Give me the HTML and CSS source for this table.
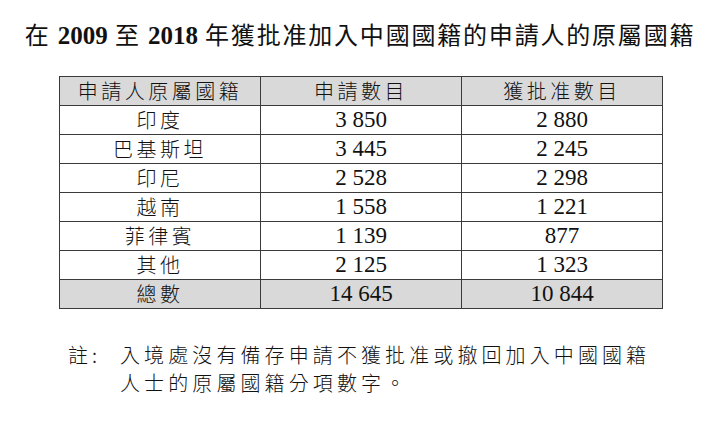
FILE: index.html
```html
<!DOCTYPE html>
<html lang="zh-Hant">
<head>
<meta charset="utf-8">
<link rel="stylesheet" href="styles.css">
</head>
<body>
<h1 class="title">在 <span class="num">2009</span> 至 <span class="num">2018</span> 年獲批准加入中國國籍的申請人的原屬國籍</h1>
<table class="data">
  <thead>
    <tr class="shade">
      <th>申請人原屬國籍</th>
      <th>申請數目</th>
      <th>獲批准數目</th>
    </tr>
  </thead>
  <tbody>
    <tr><td>印度</td><td class="n">3 850</td><td class="n">2 880</td></tr>
    <tr><td>巴基斯坦</td><td class="n">3 445</td><td class="n">2 245</td></tr>
    <tr><td>印尼</td><td class="n">2 528</td><td class="n">2 298</td></tr>
    <tr><td>越南</td><td class="n">1 558</td><td class="n">1 221</td></tr>
    <tr><td>菲律賓</td><td class="n">1 139</td><td class="n">877</td></tr>
    <tr><td>其他</td><td class="n">2 125</td><td class="n">1 323</td></tr>
    <tr class="shade"><td>總數</td><td class="n">14 645</td><td class="n">10 844</td></tr>
  </tbody>
</table>
<div class="note">
  <span class="label">註:</span>
  <p class="note-text">入境處沒有備存申請不獲批准或撤回加入中國國籍<br>人士的原屬國籍分項數字。</p>
</div>
</body>
</html>
```

FILE: styles.css
```css
html, body {
  margin: 0;
  padding: 0;
  background: #ffffff;
  color: #111111;
  font-family: "Noto Sans CJK TC", "Noto Sans CJK SC", sans-serif;
}

.title {
  margin: 0;
  padding-top: 19px;
  height: 56px;
  box-sizing: border-box;
  font-size: 24px;
  line-height: 30px;
  font-weight: 400;
  letter-spacing: 1.8px;
  text-align: center;
  white-space: nowrap;
}

.num {
  font-family: "Liberation Serif", serif;
  font-weight: 700;
  font-size: 25px;
  letter-spacing: 0;
}

.data {
  margin: 20px 0 0 59px;
  width: 604px;
  border-collapse: collapse;
  table-layout: fixed;
}

.data th,
.data td {
  border: 1px solid #3a3a3a;
  height: 28px;
  padding: 0;
  text-align: center;
  vertical-align: middle;
  font-size: 20px;
  font-weight: 300;
  line-height: 28px;
  letter-spacing: 3.5px;
  white-space: nowrap;
}

.data td.n {
  font-family: "Liberation Serif", serif;
  font-size: 23px;
  letter-spacing: 0;
  font-weight: 400;
}

.shade th,
.shade td {
  background: #d9d9d9;
}

.note {
  display: flex;
  margin: 32px 0 0 68px;
  font-size: 20px;
  font-weight: 300;
  line-height: 28px;
  letter-spacing: 4.1px;
}

.label {
  width: 52px;
  flex: none;
}

.note-text {
  margin: 0;
  white-space: nowrap;
}
```
